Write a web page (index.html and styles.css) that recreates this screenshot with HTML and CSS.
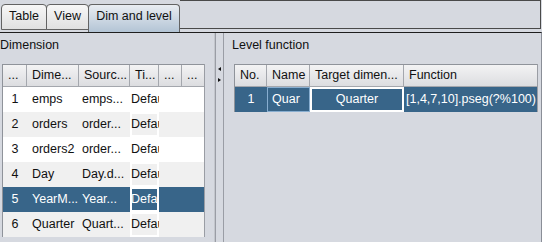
FILE: index.html
```html
<!DOCTYPE html>
<html lang="en">
<head>
  <meta charset="UTF-8" />
  <title>Dim and level</title>
  <link rel="stylesheet" href="styles.css">
</head>
<body>

  <div class="tabbar">
    <div class="tab tab-table">Table</div>
    <div class="tab tab-view">View</div>
    <div class="tab tab-dim active">Dim and level</div>
    <div class="tab-rest"></div>
  </div>

  <div class="content">
    <!-- Dimension -->
    <div class="panel panel-left">
      <div class="panel-title">Dimension</div>
      <div class="grid dim-grid">
        <div class="row head">
          <div class="hc">...</div>
          <div class="hc">Dime...</div>
          <div class="hc">Sourc...</div>
          <div class="hc">Ti...</div>
          <div class="hc">...</div>
          <div class="hc">...</div>
        </div>
        <div class="row odd">
          <div class="c num">1</div><div class="c name">emps</div><div class="c src">emps...</div><div class="c combo">Default</div><div class="c"></div><div class="c"></div>
        </div>
        <div class="row even">
          <div class="c num">2</div><div class="c name">orders</div><div class="c src">order...</div><div class="c combo">Default</div><div class="c"></div><div class="c"></div>
        </div>
        <div class="row odd">
          <div class="c num">3</div><div class="c name">orders2</div><div class="c src">order...</div><div class="c combo">Default</div><div class="c"></div><div class="c"></div>
        </div>
        <div class="row even">
          <div class="c num">4</div><div class="c name">Day</div><div class="c src">Day.d...</div><div class="c combo">Default</div><div class="c"></div><div class="c"></div>
        </div>
        <div class="row selected">
          <div class="c num">5</div><div class="c name">YearM...</div><div class="c src">Year...</div><div class="c combo">Default</div><div class="c"></div><div class="c"></div>
        </div>
        <div class="row even">
          <div class="c num">6</div><div class="c name">Quarter</div><div class="c src">Quart...</div><div class="c combo">Default</div><div class="c"></div><div class="c"></div>
        </div>
      </div>
    </div>

    <div class="splitter">
      <span class="arrow arrow-left"></span>
      <span class="arrow arrow-right"></span>
    </div>

    <!-- Level function -->
    <div class="panel panel-right">
      <div class="panel-title">Level function</div>
      <div class="grid level-grid">
        <div class="row head">
          <div class="hc">No.</div>
          <div class="hc">Name</div>
          <div class="hc">Target dimen...</div>
          <div class="hc">Function</div>
        </div>
        <div class="row selected">
          <div class="c num">1</div>
          <div class="c focus">Quar</div>
          <div class="c combo center">Quarter</div>
          <div class="c func">[1,4,7,10].pseg(?%100)</div>
        </div>
      </div>
    </div>
  </div>

</body>
</html>
```

FILE: styles.css
```css
body {
  margin: 0;
  width: 542px;
  height: 242px;
  overflow: hidden;
  background: #d6d9e0;
  font-family: 'Liberation Sans', Arial, sans-serif;
  font-size: 12.5px;
  color: #111;
}

/* tabs */
.tabbar {
  display: flex;
  align-items: flex-start;
  height: 32px;
  padding-left: 1px;
}

.tab {
  box-sizing: border-box;
  margin-top: 4px;
  height: 26px;
  line-height: 22px;
  text-align: center;
  border: 1px solid #636363;
  border-radius: 4px 4px 0 0;
  background: linear-gradient(#f7f7f7, #e0e0e0);
  white-space: nowrap;
}

.tab-table { width: 46px; }
.tab-view { width: 43px; margin-left: -1px; }
.tab-dim { width: 92px; margin-left: -1px; }

.tab.active {
  height: 28px;
  border-bottom: none;
  background: linear-gradient(#e9edf2, #b3c4d5);
}

.tab-rest {
  box-sizing: border-box;
  width: 361px;
  height: 29px;
  border: 1px solid #4a4a4a;
  border-left: none;
}

/* content */
.content {
  display: flex;
  height: 209px;
  border-top: 1px solid #1e1e1e;
  border-right: 1px solid #8a8e97;
}

.panel-left {
  width: 214px;
  border-right: 1px solid #c3c6cc;
}

.panel-right {
  flex: 1;
  border-left: 1px solid #9a9da5;
  padding-left: 8px;
}

.panel-title {
  padding-top: 5px;
  line-height: 15px;
  margin-bottom: 11px;
  white-space: nowrap;
}

.splitter {
  box-sizing: border-box;
  width: 8px;
  border-left: 1px solid #9a9da5;
  display: flex;
  flex-direction: column;
  align-items: center;
  padding-top: 34px;
  gap: 7px;
}

.arrow {
  width: 0;
  height: 0;
  border-top: 2.5px solid transparent;
  border-bottom: 2.5px solid transparent;
}
.arrow-left { border-right: 3px solid #111; }
.arrow-right { border-left: 3px solid #111; }

/* tables */
.grid {
  border-left: 1px solid #8f939a;
  border-right: 1px solid #9a9da4;
}

.dim-grid {
  width: 201px;
  margin-left: 2px;
}

.level-grid {
  width: 302px;
  margin-left: 2px;
}

.row {
  display: grid;
  height: 25px;
  line-height: 25px;
}

.dim-grid .row { grid-template-columns: 24px 52px 51px 29px 23px 22px; }
.level-grid .row { grid-template-columns: 32px 43px 94px 133px; }

.row.head {
  height: 23px;
  line-height: 21px;
  box-sizing: border-box;
  border-top: 1px solid #8f939a;
  border-bottom: 1px solid #a4a7ad;
  background: linear-gradient(#f3f3f4, #dcdde0);
}

.hc {
  box-sizing: border-box;
  padding-left: 5px;
  border-right: 1px solid #a4a7ad;
  white-space: nowrap;
  overflow: hidden;
}
.hc:last-child { border-right: none; }

.c {
  box-sizing: border-box;
  white-space: nowrap;
  overflow: hidden;
}

.row.odd { background: #fff; }
.row.even { background: #f0f0f0; }
.row.selected { background: #386589; color: #fff; }

.num { text-align: center; }
.name { padding-left: 5px; }
.src { padding-left: 3px; }

.combo {
  padding-left: 1px;
  box-shadow: inset 0 0 0 2px #fff;
}
.combo.center {
  padding-left: 0;
  text-align: center;
}

.focus {
  padding-left: 4px;
  line-height: 23px;
  border: 1px solid #88aed0;
}

.func { padding-left: 2px; }
```
